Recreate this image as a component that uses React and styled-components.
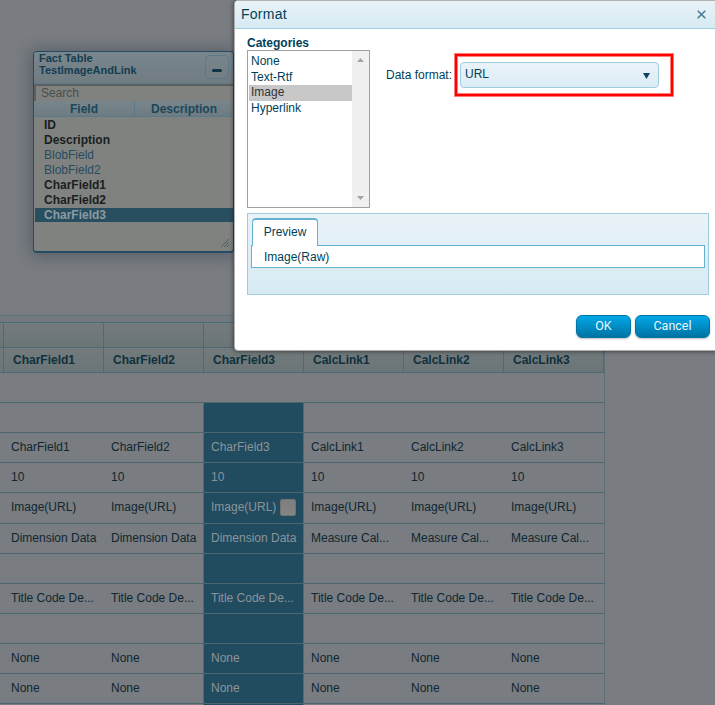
import styled, { createGlobalStyle, css } from 'styled-components';

const GlobalStyle = createGlobalStyle`
  * {
    box-sizing: border-box;
  }

  body {
    margin: 0;
    font-family: 'Liberation Sans', Arial, sans-serif;
    font-size: 12px;
    color: #003f59;
    overflow: hidden;
  }
`;

const Page = styled.div`
  position: relative;
  display: flex;
  flex-direction: column;
  width: 715px;
  height: 705px;
  overflow: hidden;
  background-color: #797c81;
`;

/* Canvas with the tables */
const Canvas = styled.div`
  height: 315px;
  flex-shrink: 0;
  padding: 51px 0 0 33px;
  background-color: #797c81;
`;

const TablePanel = styled.div`
  display: flex;
  flex-direction: column;
  width: 201px;
  height: 202px;
  border: 1px solid #264c63;
  border-bottom-width: 2px;
  border-radius: 4px;
  background-color: #80827f;
  box-shadow: 0 1px 16px 2px rgba(35, 50, 65, 0.42);
  overflow: hidden;
`;

const PanelHeader = styled.div`
  display: flex;
  justify-content: space-between;
  height: 32px;
  flex-shrink: 0;
  padding: 0 4px 0 5px;
  border-bottom: 1px solid #5e7c8c;
  background: linear-gradient(#79868c, #707c82);
  color: #143d52;
  font-size: 11px;
  font-weight: bold;
  line-height: 12px;
`;

const Minimize = styled.div`
  display: flex;
  align-items: flex-end;
  justify-content: center;
  width: 24px;
  height: 24px;
  margin-top: 3px;
  padding-bottom: 6px;
  border: 1px solid #5c7988;
  border-radius: 4px;

  &::after {
    content: '';
    width: 10px;
    height: 3px;
    border-radius: 2px;
    background-color: #123246;
  }
`;

const Search = styled.div`
  height: 17px;
  flex-shrink: 0;
  padding-left: 5px;
  border-top: 2px solid #5d605f;
  border-left: 2px solid #5d605f;
  color: #4a4d4d;
  line-height: 14px;
`;

const Columns = styled.div`
  display: flex;
  height: 16px;
  flex-shrink: 0;
  border-bottom: 1px solid #587b8c;
  background: linear-gradient(#78858b, #6e7b81);
  color: #1c465b;
  font-weight: bold;
  line-height: 16px;
  text-align: center;
`;

const Column = styled.div`
  width: 100px;
  flex-shrink: 0;

  & + & {
    width: 99px;
    border-left: 1px solid #56798b;
  }
`;

const Fields = styled.div`
  flex: 1;
  padding-left: 1px;
`;

const Field = styled.div`
  height: 15px;
  padding-left: 9px;
  color: ${(props) => (props.$muted ? '#264c5f' : '#191e20')};
  font-weight: ${(props) => (props.$muted ? 'normal' : 'bold')};
  line-height: 16px;

  ${(props) =>
    props.$selected &&
    css`
      height: 14px;
      margin-top: 1px;
      background-color: #294e60;
      color: #8b9ba3;
      line-height: 14px;
    `}
`;

const Resize = styled.svg`
  display: block;
  align-self: flex-end;
  width: 8px;
  height: 8px;
  margin: 0 4px 4px 0;
`;

const Splitter = styled.div`
  height: 7px;
  flex-shrink: 0;
  border-top: 1px solid #5f747d;
  background-color: #727a7d;
`;

/* Grid with the properties of each field */
const Grid = styled.div`
  width: 605px;
  border-top: 1px solid #486b7a;
  border-right: 1px solid #5d6f77;
`;

const HeadRow = styled.div`
  display: flex;
  height: 25px;
  border-bottom: 1px solid #4d6873;
  background: linear-gradient(#737b7c, #6b7577);
`;

const HeadCell = styled.div`
  width: ${(props) => (props.$first ? 4 : 100)}px;
  flex-shrink: 0;
  padding-left: ${(props) => (props.$first ? 0 : 9)}px;
  border-right: 1px solid #506a75;
  color: #10303d;
  font-weight: bold;
  line-height: 25px;
`;

const Row = styled.div`
  display: flex;
  height: ${(props) => props.$height || 30}px;
  padding-left: 4px;
  border-bottom: 1px solid #4c666f;
`;

const Cell = styled.div`
  display: flex;
  align-items: center;
  width: 100px;
  flex-shrink: 0;
  padding: 0 0 2px 7px;
  color: #10272f;
  white-space: nowrap;

  ${(props) =>
    props.$selected &&
    css`
      margin-left: -1px;
      width: 101px;
      border-left: 1px solid #506a75;
      border-right: 1px solid #506a75;
      background-color: #214b5f;
      color: #89959b;
    `}
`;

const EditButton = styled.span`
  width: 16px;
  height: 17px;
  margin-left: 4px;
  border: 1px solid #727272;
  border-radius: 2px;
  background: linear-gradient(#7d7d7d, #858585);
`;

/* Format dialog */
const Dialog = styled.div`
  position: absolute;
  top: 0;
  left: 234px;
  display: flex;
  flex-direction: column;
  width: 486px;
  height: 351px;
  border: 1px solid #b1b1b1;
  border-radius: 4px;
  background-color: #fff;
  box-shadow: 0 0 5px rgba(0, 0, 0, 0.6);
`;

const TitleBar = styled.div`
  display: flex;
  align-items: center;
  justify-content: space-between;
  height: 28px;
  flex-shrink: 0;
  padding: 0 13px 2px 6px;
  border-bottom: 1px solid #9ccde0;
  border-radius: 3px 3px 0 0;
  background: linear-gradient(#e9f3f8, #d7eaf3);
  font-size: 14px;
  letter-spacing: 0.25px;
`;

const CloseIcon = styled.svg`
  width: 9px;
  height: 9px;
  margin-top: 2px;
`;

const DialogBody = styled.div`
  padding: 7px 10px 0 12px;
`;

const Settings = styled.div`
  display: flex;
  height: 172px;
`;

const Categories = styled.div`
  width: 123px;
`;

const Label = styled.div`
  height: 14px;
  font-weight: bold;
  line-height: 14px;
`;

const ListBox = styled.div`
  display: flex;
  height: 158px;
  border: 1px solid #a0a0a0;
`;

const Options = styled.div`
  flex: 1;
  padding: 3px 0 0 1px;
`;

const Option = styled.div`
  height: ${(props) => (props.$selected ? '16px' : '15.7px')};
  padding-left: 2px;
  background-color: ${(props) => (props.$selected ? '#c8c8c8' : 'transparent')};
  color: ${(props) => (props.$selected ? '#2e3438' : '#003f59')};
  line-height: 15px;
`;

const ScrollBar = styled.div`
  display: flex;
  flex-direction: column;
  align-items: center;
  justify-content: space-between;
  width: 17px;
  padding: 7px 0;
  background-color: #f0f0f0;
`;

const Arrow = styled.svg`
  width: 7px;
  height: 4px;
  fill: #a3a3a3;
`;

const FormatField = styled.div`
  display: flex;
  height: 42px;
  margin: 18px 0 0 16px;
`;

const FormatLabel = styled.div`
  width: 69px;
  line-height: 42px;
`;

const Highlight = styled.div`
  width: 218px;
  height: 42px;
  padding: 6px 0 0 3px;
  border: 2px solid #fe0000;
  box-shadow: 0 0 0 1px #ff7c7c, inset 0 0 0 1px #ff7c7c;
`;

const Select = styled.div`
  display: flex;
  align-items: center;
  justify-content: space-between;
  width: 199px;
  height: 26px;
  padding: 0 8px 2px 4px;
  border: 1px solid #9dccdf;
  border-radius: 4px;
  background: linear-gradient(#eaf3f9, #dcecf4);
`;

const SelectArrow = styled.svg`
  width: 7px;
  height: 6px;
  margin-top: 3px;
  fill: #084561;
`;

const Preview = styled.div`
  width: 462px;
  height: 82px;
  margin-top: 5px;
  padding: 5px 3px 0;
  border: 1px solid #9dccdf;
  background: linear-gradient(#e9f3f8, #d7eaf4);
`;

const Tab = styled.div`
  position: relative;
  z-index: 1;
  width: 66px;
  height: 28px;
  margin: -1px 0 -1px 1px;
  border: 1px solid #68b0cf;
  border-top-width: 2px;
  border-bottom: 0;
  border-radius: 4px 4px 0 0;
  background-color: #fff;
  line-height: 25px;
  text-align: center;
`;

const PreviewText = styled.div`
  height: 23px;
  padding-left: 12px;
  border: 1px solid #68b0cf;
  background-color: #fff;
  line-height: 22px;
`;

const Actions = styled.div`
  display: flex;
  justify-content: flex-end;
  gap: 4px;
  width: 463px;
  margin-top: 20px;
`;

const Button = styled.button`
  width: ${(props) => props.$width}px;
  height: 23px;
  padding: 0 0 2px;
  border: 1px solid #0075a4;
  border-radius: 6px;
  background: linear-gradient(#00a8e8, #0073a3);
  box-shadow: 0 1px 2px rgba(0, 0, 0, 0.25);
  color: #e9f7fd;
  font: 12.5px Roboto, sans-serif;
`;

const fields = [
  { name: 'ID' },
  { name: 'Description' },
  { name: 'BlobField', muted: true },
  { name: 'BlobField2', muted: true },
  { name: 'CharField1' },
  { name: 'CharField2' },
  { name: 'CharField3', selected: true },
];

const names = ['CharField1', 'CharField2', 'CharField3', 'CalcLink1', 'CalcLink2', 'CalcLink3'];

const repeat = (text) => names.map(() => text);

const rows = [
  { cells: repeat('') },
  { cells: names },
  { cells: repeat('10') },
  { cells: repeat('Image(URL)'), height: 31, editable: true },
  { cells: names.map((name) => (name.startsWith('Char') ? 'Dimension Data' : 'Measure Cal...')) },
  { cells: repeat('') },
  { cells: repeat('Title Code De...') },
  { cells: repeat('') },
  { cells: repeat('None') },
  { cells: repeat('None') },
  { cells: repeat('') },
];

const categories = ['None', 'Text-Rtf', 'Image', 'Hyperlink'];

function FactTable() {
  return (
    <TablePanel>
      <PanelHeader>
        <div>
          Fact Table
          <br />
          TestImageAndLink
        </div>
        <Minimize />
      </PanelHeader>
      <Search>Search</Search>
      <Columns>
        <Column>Field</Column>
        <Column>Description</Column>
      </Columns>
      <Fields>
        {fields.map((field) => (
          <Field key={field.name} $muted={field.muted} $selected={field.selected}>
            {field.name}
          </Field>
        ))}
      </Fields>
      <Resize viewBox="0 0 8 8" stroke="#4b5c68">
        <path d="M0 8 8 0M3 8l5-5M6 8l2-2" />
      </Resize>
    </TablePanel>
  );
}

function PropertiesGrid() {
  return (
    <Grid>
      <HeadRow>
        <HeadCell $first />
        {names.map((name) => (
          <HeadCell key={name} />
        ))}
      </HeadRow>
      <HeadRow>
        <HeadCell $first />
        {names.map((name) => (
          <HeadCell key={name}>{name}</HeadCell>
        ))}
      </HeadRow>
      <Row />
      {rows.map((row, i) => (
        <Row key={i} $height={row.height}>
          {row.cells.map((text, j) => (
            <Cell key={j} $selected={j === 2}>
              {text}
              {row.editable && j === 2 && <EditButton />}
            </Cell>
          ))}
        </Row>
      ))}
    </Grid>
  );
}

function FormatDialog() {
  return (
    <Dialog>
      <TitleBar>
        Format
        <CloseIcon viewBox="0 0 9 9" stroke="#4b7d94" strokeWidth="1.6">
          <path d="M.7.7l7.6 7.6M8.3.7.7 8.3" />
        </CloseIcon>
      </TitleBar>
      <DialogBody>
        <Settings>
          <Categories>
            <Label>Categories</Label>
            <ListBox>
              <Options>
                {categories.map((name) => (
                  <Option key={name} $selected={name === 'Image'}>
                    {name}
                  </Option>
                ))}
              </Options>
              <ScrollBar>
                <Arrow viewBox="0 0 7 4">
                  <path d="M0 4 3.5 0 7 4z" />
                </Arrow>
                <Arrow viewBox="0 0 7 4">
                  <path d="M0 0h7L3.5 4z" />
                </Arrow>
              </ScrollBar>
            </ListBox>
          </Categories>
          <FormatField>
            <FormatLabel>Data format:</FormatLabel>
            <Highlight>
              <Select>
                URL
                <SelectArrow viewBox="0 0 7 6">
                  <path d="M0 0h7L3.5 6z" />
                </SelectArrow>
              </Select>
            </Highlight>
          </FormatField>
        </Settings>
        <Preview>
          <Tab>Preview</Tab>
          <PreviewText>Image(Raw)</PreviewText>
        </Preview>
        <Actions>
          <Button $width={55}>OK</Button>
          <Button $width={75}>Cancel</Button>
        </Actions>
      </DialogBody>
    </Dialog>
  );
}

function App() {
  return (
    <>
      <GlobalStyle />
      <Page>
        <Canvas>
          <FactTable />
        </Canvas>
        <Splitter />
        <PropertiesGrid />
        <FormatDialog />
      </Page>
    </>
  );
}

export default App;
